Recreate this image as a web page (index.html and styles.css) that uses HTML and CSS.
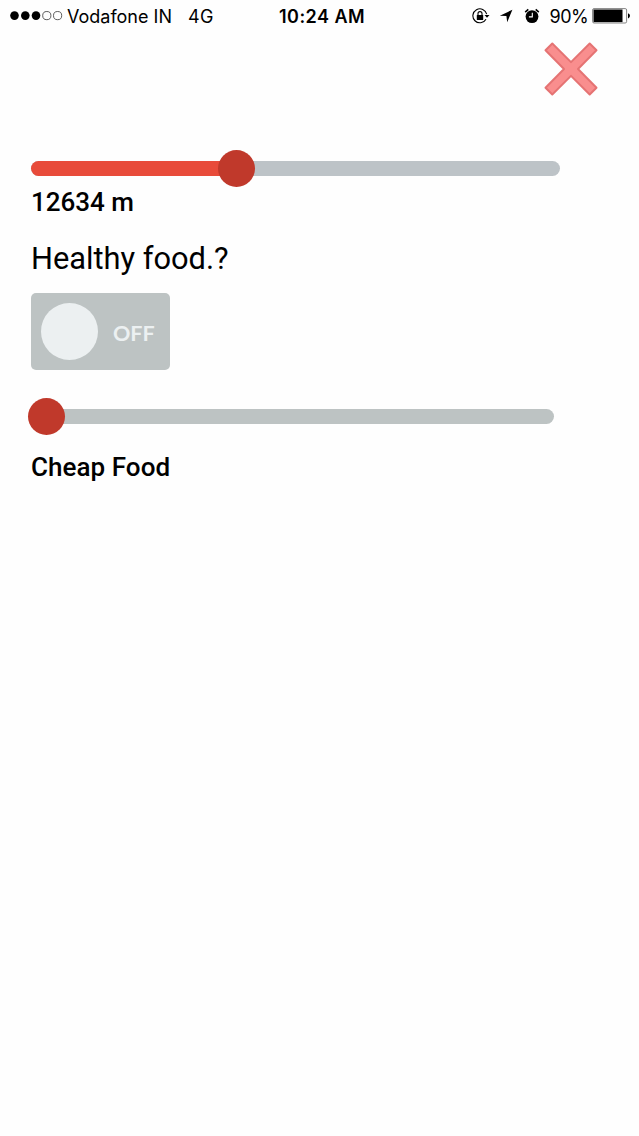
FILE: index.html
```html
<!DOCTYPE html>
<html lang="en">
<head>
    <meta charset="UTF-8">
    <meta name="viewport" content="width=device-width, initial-scale=1.0">
    <title>Food Filters</title>
    <link rel="stylesheet" href="styles.css">
</head>
<body>
    <div class="status-bar">
        <div class="carrier">
            <svg class="signal" width="54" height="12" viewBox="0 0 54 12">
                <circle cx="4.5" cy="5.6" r="4.3"/>
                <circle cx="15.3" cy="5.6" r="4.3"/>
                <circle cx="26" cy="5.6" r="4.3"/>
                <circle class="empty" cx="36.8" cy="5.6" r="4.1"/>
                <circle class="empty" cx="47.6" cy="5.6" r="4.1"/>
            </svg>
            <span class="name">Vodafone IN</span>
            <span class="network">4G</span>
        </div>
        <div class="time">10:24 AM</div>
        <div class="indicators">
            <svg class="lock" width="18" height="16" viewBox="0 0 18 16">
                <path d="M14 11.2A7 7 0 1 1 14.7 6.2" fill="none" stroke="#000" stroke-width="1.1"/>
                <path d="M12.5 6.9h5l-2.5 2.9z"/>
                <rect x="4.8" y="7" width="6.4" height="4.9" rx=".5"/>
                <path d="M6 7.5V5.6a2 2 0 0 1 4 0v1.9" fill="none" stroke="#000" stroke-width="1.1"/>
            </svg>
            <svg class="arrow" width="14" height="14" viewBox="0 0 14 14">
                <path d="M13.4.8 8.2 13.2 7.4 7.1.8 6.7z"/>
            </svg>
            <svg class="alarm" width="16" height="16" viewBox="0 0 16 16">
                <circle cx="8" cy="8.6" r="6.4"/>
                <path d="M1.2 4.2 4.3 1.4M14.8 4.2 11.7 1.4" stroke="#000" stroke-width="1.6"/>
                <path d="M8.3 4.8v4.1H4.9" fill="none" stroke="#fff" stroke-width="1.1"/>
            </svg>
            <span class="percent">90%</span>
            <svg class="battery" width="39" height="16" viewBox="0 0 39 16">
                <rect x=".6" y=".6" width="34" height="14.4" rx="1.4" fill="#fff" stroke="#666" stroke-width=".8"/>
                <rect x="1.5" y="1.5" width="29" height="12.6"/>
                <path d="M36 5.2q2 .8 2 2.6t-2 2.6z"/>
            </svg>
        </div>
    </div>

    <div class="filters">
        <button class="close" aria-label="Close">
            <svg width="54" height="54" viewBox="0 0 54 54">
                <path d="M8.3 1.5 27 20.1 45.7 1.5 52.5 8.3 34 27 52.5 45.7 45.7 52.5 27 33.9 8.3 52.5 1.5 45.7 20 27 1.5 8.3z"/>
            </svg>
        </button>

        <div class="slider distance">
            <div class="fill"></div>
            <div class="thumb"></div>
        </div>
        <p class="value">12634 m</p>

        <h3>Healthy food.?</h3>
        <div class="toggle">
            <span class="knob"></span>
            <span class="state">OFF</span>
        </div>

        <div class="slider price">
            <div class="thumb"></div>
        </div>
        <p class="value">Cheap Food</p>
    </div>
</body>
</html>
```
FILE: styles.css
```css
* {
    margin: 0;
    padding: 0;
    box-sizing: border-box;
}

body {
    background: #fefefe;
    color: #000;
    font-family: Roboto, sans-serif;
}

svg {
    display: block;
}

.status-bar {
    display: grid;
    grid-template-columns: 1fr auto 1fr;
    align-items: center;
    height: 32px;
    padding: 0 8px 0 10px;
    font-family: Inter, sans-serif;
    font-size: 18px;
    line-height: 30px;
}

.status-bar span,
.time {
    padding-top: 2px;
}

.carrier,
.indicators {
    display: flex;
    align-items: center;
}

.signal .empty {
    fill: none;
    stroke: #333;
    stroke-width: 0.8;
}

.carrier .name {
    margin-left: 3px;
}

.carrier .network {
    margin-left: 16px;
    letter-spacing: 0.4px;
}

.time {
    padding-left: 3px;
    font-weight: 600;
    letter-spacing: 0.45px;
}

.indicators {
    justify-content: flex-end;
}

.lock {
    margin-right: 9px;
}

.arrow {
    margin-right: 11px;
}

.alarm {
    margin-right: 10px;
}

.percent {
    margin-right: 4px;
    letter-spacing: -0.6px;
}

.filters {
    padding: 10px 31px 0;
}

.close {
    display: block;
    width: 54px;
    height: 54px;
    margin: 0 10px 65px auto;
    border: none;
    background: none;
    cursor: pointer;
}

.close path {
    fill: #f98e8e;
    stroke: #e57373;
    stroke-width: 2;
    stroke-linejoin: round;
}

.slider {
    display: flex;
    align-items: center;
    height: 15px;
    border-radius: 8px;
    background: #bdc3c7;
}

.slider .fill {
    width: 205px;
    height: 15px;
    border-radius: 8px 0 0 8px;
    background: #e84b3a;
}

.slider .thumb {
    flex: none;
    width: 37px;
    height: 37px;
    border-radius: 50%;
    background: #c0392b;
}

.distance {
    width: 529px;
}

.distance .thumb {
    margin-left: -18px;
}

.price {
    width: 523px;
    margin-top: 39px;
    background: #bdc3c3;
}

.price .thumb {
    margin-left: -3px;
}

.value {
    font-size: 26px;
    font-weight: 500;
    line-height: 30px;
}

.distance + .value {
    margin-top: 11px;
}

.price + .value {
    margin-top: 28px;
    letter-spacing: 0.05px;
}

h3 {
    margin: 23px 0 16px;
    font-size: 30.8px;
    font-weight: 400;
    line-height: 37px;
}

.toggle {
    display: flex;
    align-items: center;
    width: 139px;
    height: 77px;
    padding-left: 10px;
    border-radius: 5px;
    background: #bdc3c3;
    color: #ecf0f1;
}

.toggle .knob {
    width: 57px;
    height: 57px;
    margin-right: 15px;
    border-radius: 50%;
    background: #ecf0f1;
}

.toggle .state {
    padding-top: 2px;
    font-family: Lato, sans-serif;
    font-size: 21.5px;
    font-weight: 700;
}
```
